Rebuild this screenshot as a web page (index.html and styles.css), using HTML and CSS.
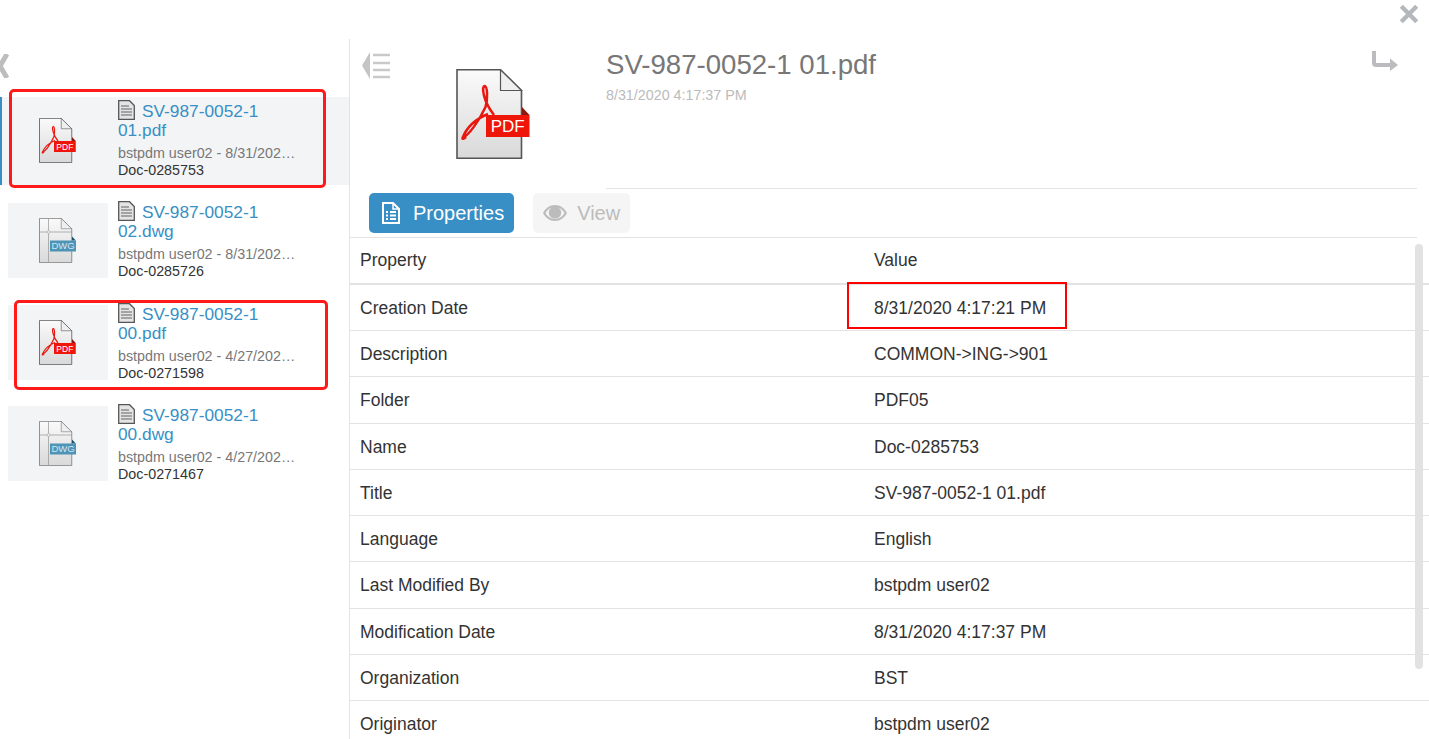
FILE: index.html
```html
<!DOCTYPE html>
<html>
<head>
<title>Document details</title>
<link rel="stylesheet" href="styles.css">
</head>
<body>
<svg class="defs" width="0" height="0">
  <defs>
    <linearGradient id="paper" x1="0" y1="0" x2="0" y2="1">
      <stop offset="0" stop-color="#fafafa"/>
      <stop offset="1" stop-color="#d9d9d9"/>
    </linearGradient>
    <symbol id="pdf-icon" viewBox="0 0 74 90">
      <path d="M1 .8H44.500L65.500 21.500V89.200H1Z" fill="url(#paper)" stroke="#555" stroke-width="1.600"/>
      <path d="M44.500 .8V21.500H65.500Z" fill="#efefef" stroke="#555" stroke-width="1.200"/>
      <path d="M66 38 73.500 46H66Z" fill="#8a1a10"/>
      <path d="M6.500 69C13 66 23 52 29.500 38 32 30 31.500 17 28.500 17 25.500 18 27 32 38 46M6.500 69C12 55 22 49 32 45M6.500 69C6 70 8 70.500 10 68" fill="none" stroke="#e8170f" stroke-width="2.500"/>
      <rect x="30" y="46" width="43.500" height="22" fill="#ee1509"/>
      <text x="51.700" y="63" class="pdf-label">PDF</text>
    </symbol>
    <symbol id="dwg-icon" viewBox="0 0 74 90">
      <path d="M1 .8H44.500L65.500 21.500V89.200H1Z" fill="url(#paper)" stroke="#777" stroke-width="1.600"/>
      <path d="M44.500 .8V21.500H65.500Z" fill="#efefef" stroke="#777" stroke-width="1.200"/>
      <path d="M1 28H65M19 1V88" stroke="#999" stroke-width="1.500" fill="none"/>
      <circle cx="19" cy="28" r="3" fill="#eee" stroke="#999"/>
      <path d="M66 37 73.500 45H66Z" fill="#1d4f6e"/>
      <rect x="22" y="45" width="52" height="22" fill="#4f93b6"/>
      <text x="48" y="62" class="dwg-label">DWG</text>
    </symbol>
    <symbol id="doc-glyph" viewBox="0 0 17 20">
      <path d="M.7.7H11.500L16.300 5.500V19.300H.7Z" fill="#e4e4e4" stroke="#555" stroke-width="1.300"/>
      <path d="M3 6H11M3 9H14M3 12H14M3 15H14" stroke="#8d8d8d" stroke-width="1.500"/>
    </symbol>
  </defs>
</svg>

<div class="topbar">
  <svg class="close-icon" viewBox="0 0 20 20"><path d="M3 3 17 17M17 3 3 17" stroke="#b4b8bd" stroke-width="4"/></svg>
</div>

<div class="layout">
  <aside class="sidebar">
    <div class="side-head">
      <svg class="chevron" viewBox="0 0 12 24"><path d="M-7 0 7 24M7 0-7 24" fill="none" stroke="#bdbdbd" stroke-width="5"/></svg>
    </div>
    <ul class="doc-list">
      <li class="doc selected">
        <div class="thumb"><svg class="thumb-icon"><use href="#pdf-icon"/></svg></div>
        <div class="doc-info">
          <div class="doc-title"><svg class="doc-glyph"><use href="#doc-glyph"/></svg>SV-987-0052-1 01.pdf</div>
          <div class="doc-meta">bstpdm user02 - 8/31/202…</div>
          <div class="doc-num">Doc-0285753</div>
        </div>
      </li>
      <li class="doc">
        <div class="thumb"><svg class="thumb-icon"><use href="#dwg-icon"/></svg></div>
        <div class="doc-info">
          <div class="doc-title"><svg class="doc-glyph"><use href="#doc-glyph"/></svg>SV-987-0052-1 02.dwg</div>
          <div class="doc-meta">bstpdm user02 - 8/31/202…</div>
          <div class="doc-num">Doc-0285726</div>
        </div>
      </li>
      <li class="doc">
        <div class="thumb"><svg class="thumb-icon"><use href="#pdf-icon"/></svg></div>
        <div class="doc-info">
          <div class="doc-title"><svg class="doc-glyph"><use href="#doc-glyph"/></svg>SV-987-0052-1 00.pdf</div>
          <div class="doc-meta">bstpdm user02 - 4/27/202…</div>
          <div class="doc-num">Doc-0271598</div>
        </div>
      </li>
      <li class="doc">
        <div class="thumb"><svg class="thumb-icon"><use href="#dwg-icon"/></svg></div>
        <div class="doc-info">
          <div class="doc-title"><svg class="doc-glyph"><use href="#doc-glyph"/></svg>SV-987-0052-1 00.dwg</div>
          <div class="doc-meta">bstpdm user02 - 4/27/202…</div>
          <div class="doc-num">Doc-0271467</div>
        </div>
      </li>
    </ul>
  </aside>

  <main class="detail">
    <div class="detail-head">
      <svg class="collapse-icon" viewBox="0 0 30 27">
        <path d="M0 13.500 8 0V27Z" fill="#c4c4c4"/>
        <path d="M11 3H28M11 11H28M11 18H28M11 25H28" stroke="#c9c9c9" stroke-width="2.500"/>
      </svg>
      <svg class="big-icon"><use href="#pdf-icon"/></svg>
      <div class="head-text">
        <h1>SV-987-0052-1 01.pdf</h1>
        <div class="head-date">8/31/2020 4:17:37 PM</div>
      </div>
      <svg class="share-icon" viewBox="0 0 28 20"><path d="M3 0V12Q3 14 5 14H20" fill="none" stroke="#bbbbc0" stroke-width="4"/><path d="M19 7.500 27 14 19 20Z" fill="#bbbbc0"/></svg>
    </div>
    <div class="tabs">
      <button class="tab active">
        <svg class="tab-icon" viewBox="0 0 18 22"><path d="M1 1H11L17 7V21H1Z" fill="none" stroke="#fff" stroke-width="2"/><path d="M11 1V7H17" fill="none" stroke="#fff" stroke-width="1.500"/><path d="M4 10H6M8 10H14M4 13.500H6M8 13.500H14M4 17H6M8 17H14" stroke="#fff" stroke-width="2"/></svg>
        Properties
      </button>
      <button class="tab">
        <svg class="eye-icon" viewBox="0 0 24 16"><path fill-rule="evenodd" d="M12 0C6.500 0 2.500 3.500 0 8 2.500 12.500 6.500 16 12 16S21.500 12.500 24 8C21.500 3.500 17.500 0 12 0ZM2.500 8C4 5.500 6 3.600 8.300 2.600A6.200 6.200 0 1 0 15.700 2.600C18 3.600 20 5.500 21.500 8 19.500 11.500 16 14 12 14S4.500 11.500 2.500 8Z" fill="#bcbcbc"/><circle cx="11" cy="6" r="2" fill="#bcbcbc"/></svg>
        View
      </button>
    </div>
    <div class="table-wrap">
      <table class="props">
        <tr class="head-row"><td>Property</td><td>Value</td></tr>
        <tr><td>Creation Date</td><td>8/31/2020 4:17:21 PM</td></tr>
        <tr><td>Description</td><td>COMMON-&gt;ING-&gt;901</td></tr>
        <tr><td>Folder</td><td>PDF05</td></tr>
        <tr><td>Name</td><td>Doc-0285753</td></tr>
        <tr><td>Title</td><td>SV-987-0052-1 01.pdf</td></tr>
        <tr><td>Language</td><td>English</td></tr>
        <tr><td>Last Modified By</td><td>bstpdm user02</td></tr>
        <tr><td>Modification Date</td><td>8/31/2020 4:17:37 PM</td></tr>
        <tr><td>Organization</td><td>BST</td></tr>
        <tr><td>Originator</td><td>bstpdm user02</td></tr>
      </table>
      <div class="scroll-thumb"></div>
    </div>
  </main>
</div>

<!-- red markup drawn on top of the screenshot -->
<div class="mark mark-one"></div>
<div class="mark mark-two"></div>
<div class="mark-box"></div>
</body>
</html>
```

FILE: styles.css
```css
* {
  box-sizing: border-box;
}
html, body {
  margin: 0;
  height: 739px;
  overflow: hidden;
  background: #fff;
}
body {
  font-family: "Liberation Sans", Arial, sans-serif;
  color: #333;
  position: relative;
}
.defs {
  position: absolute;
}
.topbar {
  height: 39px;
  position: relative;
}
.close-icon {
  position: absolute;
  top: 3px;
  right: 9px;
  width: 22px;
  height: 22px;
}
.layout {
  display: flex;
  height: 700px;
}

/* left list */
.sidebar {
  width: 350px;
  flex: none;
  border-right: 1px solid #e3e3e3;
}
.side-head {
  height: 58px;
  padding-top: 15px;
}
.chevron {
  display: block;
  width: 12px;
  height: 24px;
}
.doc-list {
  list-style: none;
  margin: 0;
  padding: 0;
}
.doc {
  display: flex;
  height: 88px;
  margin-bottom: 1.400px;
  padding: 6px 0 0 8px;
}
.doc.selected {
  background: #f3f4f6;
  border-left: 2px solid #378fc5;
  padding-left: 6px;
}
.doc + .doc {
  padding-top: 17px;
  height: 100px;
}
.thumb {
  width: 100px;
  height: 75px;
  flex: none;
  background: #f3f4f6;
  display: flex;
  justify-content: center;
  align-items: center;
  padding-right: 2px;
}
.thumb-icon {
  width: 37px;
  height: 45px;
}
.doc-info {
  width: 180px;
  margin-left: 10px;
  margin-top: -3px;
}
.doc + .doc .doc-info {
  margin-top: -2px;
}
.doc-title {
  font-size: 17.300px;
  line-height: 19px;
  color: #378fc5;
  width: 150px;
}
.doc-glyph {
  width: 17px;
  height: 20px;
  margin-right: 7px;
  vertical-align: -3px;
}
.doc-meta {
  font-size: 14.300px;
  line-height: 17px;
  color: #777;
  margin-top: 5px;
  white-space: nowrap;
}
.doc-num {
  font-size: 14.300px;
  line-height: 17px;
  color: #333;
}
.pdf-label, .dwg-label {
  font-size: 17px;
  text-anchor: middle;
  fill: #fff;
}
.dwg-label {
  font-size: 19px;
  fill: #d3e6f0;
}

/* right detail */
.detail {
  flex: 1;
  min-width: 0;
}
.detail-head {
  display: flex;
  height: 150px;
  position: relative;
}
.collapse-icon {
  width: 30px;
  height: 27px;
  margin: 13px 0 0 12px;
  flex: none;
}
.big-icon {
  width: 74px;
  height: 90px;
  margin: 30px 0 0 64px;
  flex: none;
}
.head-text {
  margin: 0 12px 0 76px;
  flex: 1;
  border-bottom: 1px solid #e3e3e3;
}
h1 {
  margin: 10px 0 0;
  font-size: 27.600px;
  line-height: 32px;
  font-weight: normal;
  color: #777;
}
.head-date {
  font-size: 14.300px;
  line-height: 18px;
  margin-top: 5px;
  color: #bbb;
}
.share-icon {
  position: absolute;
  top: 12px;
  right: 30px;
  width: 28px;
  height: 20px;
}
.tabs {
  display: flex;
  gap: 19px;
  margin: 4px 12px 0 19px;
  padding-bottom: 4px;
}
.tab {
  height: 40px;
  border: 0;
  border-radius: 5px;
  background: #f5f5f5;
  color: #bcbcbc;
  font: 20px "Liberation Sans", Arial, sans-serif;
  display: flex;
  align-items: center;
  padding: 0 10px;
}
.tab.active {
  background: #378fc5;
  color: #fff;
  padding: 0 10px 0 13px;
}
.tab-icon {
  width: 18px;
  height: 22px;
  margin-right: 13px;
}
.eye-icon {
  width: 24px;
  height: 16px;
  margin-right: 10px;
}
.table-wrap {
  position: relative;
  border-top: 1px solid #e3e3e3;
  margin-right: 12px;
}
.props {
  width: 1079px;
  border-collapse: collapse;
  font-size: 17.500px;
  color: #333;
}
.props td {
  height: 46.250px;
  padding: 2px 10px 0;
  border-bottom: 1px solid #e3e3e3;
}
.props td:first-child {
  width: 514px;
}
.head-row td {
  padding-top: 0;
  border-bottom-width: 2px;
}
.scroll-thumb {
  position: absolute;
  top: 6px;
  right: -6px;
  width: 8px;
  height: 425px;
  border-radius: 4px;
  background: #e2e2e2;
}

/* annotations */
.mark {
  position: absolute;
  border: 3.500px solid #ff1a1a;
  border-radius: 5px;
}
.mark-one {
  left: 9px;
  top: 89px;
  width: 317px;
  height: 99px;
}
.mark-two {
  left: 14px;
  top: 300px;
  width: 314px;
  height: 90px;
}
.mark-box {
  position: absolute;
  left: 847px;
  top: 282px;
  width: 220px;
  height: 47px;
  border: 2px solid #f00;
}
```
